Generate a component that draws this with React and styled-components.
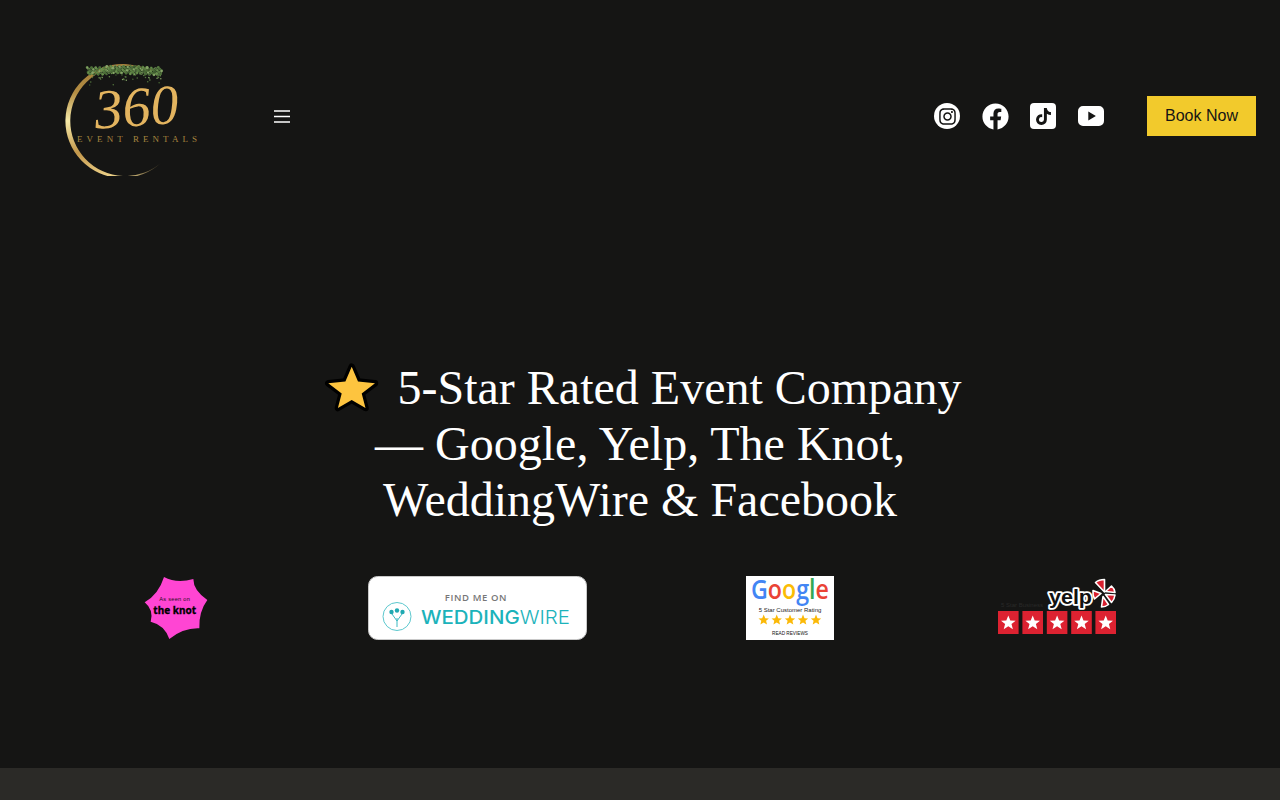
import React from 'react';
import styled, { createGlobalStyle } from 'styled-components';
import { FaFacebook, FaInstagram, FaTiktok } from 'react-icons/fa';

const GlobalStyle = createGlobalStyle`
  html, body {
    margin: 0;
    background: #151514;
    font-family: "Liberation Sans", Arial, sans-serif;
  }
`;

const frac = (n) => n - Math.floor(n);

// leaves for the vine on top of the logo ring
const leaves = Array.from({ length: 320 }, (_, i) => {
  const x = 23 + 75 * frac(i * 0.618);
  const drip = i % 3 === 0 ? 13 * frac(i * 0.773) * (0.5 + 0.5 * Math.sin(x * 0.55)) : 0;
  const sag = Math.abs(x - 60) * 0.05;
  return {
    x,
    y: 9.5 + sag + 8 * frac(i * 0.371) + drip,
    r: drip > 3 ? 0.75 : 0.8 + (i % 3) * 0.3,
    fill: ['#55793f', '#688f4c', '#3f5c30', '#86a468', '#4a6b37'][i % 5],
  };
});

const Logo = () => (
  <LogoArt viewBox="0 0 136 120" role="img" aria-label="360 Event Rentals">
    <defs>
      <linearGradient id="ring" gradientUnits="userSpaceOnUse" x1="0" y1="8" x2="0" y2="122">
        <stop offset="0" stopColor="#a07c3a" />
        <stop offset="0.25" stopColor="#b48d43" />
        <stop offset="0.5" stopColor="#f6eaa8" />
        <stop offset="0.78" stopColor="#c2964a" />
        <stop offset="1" stopColor="#efd58d" />
      </linearGradient>
      <linearGradient id="ringFade" gradientUnits="userSpaceOnUse" x1="62" y1="0" x2="102" y2="0">
        <stop offset="0" stopColor="#fff" />
        <stop offset="1" stopColor="#000" />
      </linearGradient>
      <mask id="ringMask">
        <rect width="136" height="120" fill="url(#ringFade)" />
      </mask>
    </defs>
    <g mask="url(#ringMask)">
      <path
        d="M99.5 25.5 A57 57 0 1 0 98 106 A55 55 0 1 1 99.5 25.5 Z"
        fill="url(#ring)"
      />
    </g>
    <path d="M38 12 Q60 5 88 14" fill="none" stroke="#a98240" strokeWidth="1" />
    {leaves.map((l, i) => (
      <circle key={i} cx={l.x} cy={l.y} r={l.r} fill={l.fill} />
    ))}
    <LogoNumber x="31" y="70" textLength="84" transform="rotate(-4 70 60)">360</LogoNumber>
    <LogoTagline x="13" y="85.5" textLength="120">EVENT RENTALS</LogoTagline>
  </LogoArt>
);

const HeroStar = () => (
  <StarArt viewBox="0 0 67 56" aria-hidden="true">
    <path
      d="M32.7 6.7 L39 21.5 L56 23.3 L42.7 33.5 L46.5 48 L32.7 40 L18.9 48 L22.7 33.5 L9.3 23.3 L26.4 21.5 Z"
      fill="#fdc43f"
      stroke="#000"
      strokeWidth="6.5"
      strokeLinejoin="round"
      paintOrder="stroke"
    />
  </StarArt>
);

const KnotBadge = () => (
  <BadgeArt $w={64} viewBox="42 33 192 192" role="img" aria-label="As seen on The Knot">
    <path
      d="M102 36 Q140 56 190 42 Q190 76 232 105 Q206 140 208 190 Q160 188 118 222 Q104 180 62 170 Q72 135 44 112 Q86 88 102 36 Z"
      fill="#ff45d3"
    />
    <KnotSmall x="134" y="109" textAnchor="middle">As seen on</KnotSmall>
    <KnotLarge x="134" y="146" textAnchor="middle">the knot</KnotLarge>
  </BadgeArt>
);

const WeddingWireBadge = () => (
  <BadgeArt $w={220} viewBox="0 0 220 64" role="img" aria-label="Find me on WeddingWire">
    <rect x="1.5" y="0.5" width="218" height="63" rx="9" fill="#fff" stroke="#c9c9c9" />
    <FindMe x="109" y="25" textAnchor="middle">FIND ME ON</FindMe>
    <circle cx="30" cy="40.5" r="14" fill="none" stroke="#5cc8ce" strokeWidth="1" />
    <path d="M30 51 V42 M30 45 L25 38 M30 45 L35 38" stroke="#3cbac2" strokeWidth="1" fill="none" />
    <circle cx="30" cy="34.5" r="2.2" fill="#1fa9b2" />
    <circle cx="24.5" cy="36" r="2.2" fill="#1fa9b2" />
    <circle cx="35.5" cy="36" r="2.2" fill="#1fa9b2" />
    <WeddingWord x="54" y="47.5" textLength="149" lengthAdjust="spacingAndGlyphs">
      WEDDING<WireWord>WIRE</WireWord>
    </WeddingWord>
  </BadgeArt>
);

const GoogleBadge = () => (
  <BadgeArt $w={88} viewBox="0 0 88 64" role="img" aria-label="Google 5 Star Customer Rating">
    <rect width="88" height="64" fill="#fff" />
    <GoogleWord transform="translate(5 22.5) scale(0.86 1)">
      <tspan fill="#4285f4">G</tspan>
      <tspan fill="#ea4335">o</tspan>
      <tspan fill="#fbbc05">o</tspan>
      <tspan fill="#4285f4">g</tspan>
      <tspan fill="#34a853">l</tspan>
      <tspan fill="#ea4335">e</tspan>
    </GoogleWord>
    <RatingLine x="44" y="36" textAnchor="middle">5 Star Customer Rating</RatingLine>
    {[17.7, 30.7, 44, 57, 70].map((x) => (
      <path
        key={x}
        transform={`translate(${x} 44)`}
        d="M0 -5.4 L1.5 -1.7 L5.2 -1.6 L2.4 0.8 L3.3 4.6 L0 2.5 L-3.3 4.6 L-2.4 0.8 L-5.2 -1.6 L-1.5 -1.7 Z"
        fill="#fbb908"
      />
    ))}
    <ReadReviews x="44" y="59" textAnchor="middle">READ REVIEWS</ReadReviews>
  </BadgeArt>
);

const YelpBadge = () => (
  <BadgeArt $w={124} viewBox="0 0 124 64" role="img" aria-label="Yelp 5 star business">
    <FaintLabel x="8" y="31">5 Star Business</FaintLabel>
    <YelpWord x="56" y="28" textLength="43" lengthAdjust="spacingAndGlyphs">yelp</YelpWord>
    <g fill="#d8202f" stroke="#fff" strokeWidth="1.6" strokeLinejoin="round">
      <path d="M102.5 6.5 Q106 3.5 111.5 3.5 L111.5 16 Z" />
      <path d="M112.5 15.5 L118.5 10 Q121.5 12.5 122 16.5 Z" />
      <path d="M112.5 18.5 L122 19 Q121.5 23.5 118.5 26.5 Z" />
      <path d="M110 20.5 L115.5 28.5 Q112.5 31 108.5 31 Z" />
      <path d="M108 17.5 L101.5 23 Q99.5 19.5 100 14.5 Z" />
    </g>
    {[5, 29.4, 53.8, 78.2, 102.4].map((x) => (
      <g key={x} transform={`translate(${x} 35)`}>
        <rect width="20.6" height="23" fill="#dd2231" />
        <path
          d="M10.3 4.4 L12.3 9.4 L17.6 9.7 L13.5 13 L14.9 18.2 L10.3 15.3 L5.7 18.2 L7.1 13 L3 9.7 L8.3 9.4 Z"
          fill="#fff"
        />
      </g>
    ))}
  </BadgeArt>
);

const App = () => (
  <Page>
    <GlobalStyle />
    <Header>
      <Logo />
      <MenuButton aria-label="Open menu">
        <svg width="16" height="13" viewBox="0 0 16 13" aria-hidden="true">
          <path d="M0 1h16M0 6.5h16M0 12h16" stroke="#fff" strokeWidth="1.3" />
        </svg>
      </MenuButton>
      <Socials>
        <SocialBadge $round>
          <FaInstagram size={19} />
        </SocialBadge>
        <PlainIcon>
          <FaFacebook size={27} />
        </PlainIcon>
        <SocialBadge>
          <FaTiktok size={17} />
        </SocialBadge>
        <PlainIcon>
          <svg width="26" height="20" viewBox="0 0 26 20" aria-hidden="true">
            <path
              fillRule="evenodd"
              d="M5 0h16a5 5 0 0 1 5 5v10a5 5 0 0 1-5 5H5a5 5 0 0 1-5-5V5a5 5 0 0 1 5-5Zm5.3 5.6v8.8l7.6-4.4Z"
              fill="#fff"
            />
          </svg>
        </PlainIcon>
      </Socials>
      <BookButton>Book Now</BookButton>
    </Header>
    <Hero>
      <Heading>
        <HeroStar /> 5-Star Rated Event Company — Google, Yelp, The Knot, WeddingWire &amp; Facebook
      </Heading>
      <Badges>
        <KnotBadge />
        <WeddingWireBadge />
        <GoogleBadge />
        <YelpBadge />
      </Badges>
    </Hero>
    <FooterBand />
  </Page>
);

export default App;

const Page = styled.div`
  display: flex;
  flex-direction: column;
  height: 800px;
  background: #151514;
`;

const Header = styled.header`
  display: flex;
  align-items: center;
  height: 232px;
  padding: 0 24px 0 64px;
  box-sizing: border-box;
`;

const LogoArt = styled.svg`
  display: block;
  width: 136px;
  height: 120px;
  flex: none;
`;

const LogoNumber = styled.text`
  font-family: "Liberation Serif", serif;
  font-style: italic;
  font-size: 56px;
  fill: #e3b45f;
`;

const LogoTagline = styled.text`
  font-family: "Liberation Serif", serif;
  font-size: 9px;
  fill: #a8853f;
`;

const MenuButton = styled.button`
  display: flex;
  margin-left: 74px;
  padding: 0;
  border: 0;
  background: none;
  cursor: pointer;
`;

const Socials = styled.div`
  display: flex;
  align-items: center;
  gap: 22px;
  margin-left: auto;
`;

const SocialBadge = styled.a`
  display: flex;
  align-items: center;
  justify-content: center;
  width: 26px;
  height: 26px;
  background: #fff;
  color: #151514;
  border-radius: ${(p) => (p.$round ? '50%' : '4px')};
`;

const PlainIcon = styled.a`
  display: flex;
  align-items: center;
  justify-content: center;
  width: 26px;
  height: 26px;
  color: #fff;
  svg {
    flex: none;
  }
`;

const BookButton = styled.button`
  width: 109px;
  height: 40px;
  margin-left: 43px;
  padding: 0;
  border: 0;
  background: #f2ca2c;
  color: #151514;
  font-family: inherit;
  font-size: 16px;
  cursor: pointer;
`;

const Hero = styled.section`
  display: flex;
  flex-direction: column;
  align-items: center;
  padding: 128px 0;
`;

const Heading = styled.h1`
  width: 660px;
  margin: 0;
  color: #fff;
  font-family: "Liberation Serif", "Times New Roman", serif;
  font-size: 48px;
  font-weight: 400;
  line-height: 56px;
  text-align: center;
`;

const StarArt = styled.svg`
  display: inline-block;
  width: 67px;
  height: 56px;
  vertical-align: top;
`;

const Badges = styled.div`
  display: flex;
  align-items: center;
  gap: 159px;
  align-self: flex-start;
  margin: 48px 0 0 144px;
`;

const BadgeArt = styled.svg`
  display: block;
  width: ${(p) => p.$w}px;
  height: 64px;
  flex: none;
  overflow: visible;
`;

const KnotSmall = styled.text`
  font-family: "Liberation Sans", sans-serif;
  font-size: 17px;
  letter-spacing: 0.8px;
  fill: #1c0d18;
`;

const KnotLarge = styled.text`
  font-family: "Noto Sans", sans-serif;
  font-size: 30px;
  font-weight: 700;
  fill: #000;
  stroke: #000;
  stroke-width: 1px;
`;

const FindMe = styled.text`
  font-family: "Open Sans", sans-serif;
  font-size: 9.5px;
  font-weight: 600;
  letter-spacing: 0.6px;
  fill: #777;
`;

const WeddingWord = styled.text`
  font-family: Inter, sans-serif;
  font-size: 18.5px;
  font-weight: 500;
  fill: #1cb3bb;
`;

const WireWord = styled.tspan`
  font-weight: 300;
`;

const GoogleWord = styled.text`
  font-family: "Open Sans", sans-serif;
  font-size: 27px;
  font-weight: 600;
`;

const RatingLine = styled.text`
  font-family: "Liberation Sans", sans-serif;
  font-size: 6px;
  fill: #222;
`;

const ReadReviews = styled.text`
  font-family: "Liberation Sans", sans-serif;
  font-size: 4.7px;
  fill: #111;
`;

const FaintLabel = styled.text`
  font-family: "Liberation Sans", sans-serif;
  font-size: 6px;
  fill: #2a2a29;
`;

const YelpWord = styled.text`
  font-family: "Liberation Sans", sans-serif;
  font-size: 20px;
  font-weight: 700;
  fill: #111;
  stroke: #fff;
  stroke-width: 3.6px;
  stroke-linejoin: round;
  paint-order: stroke;
`;

const FooterBand = styled.div`
  flex: 1;
  background: #2b2a27;
`;
